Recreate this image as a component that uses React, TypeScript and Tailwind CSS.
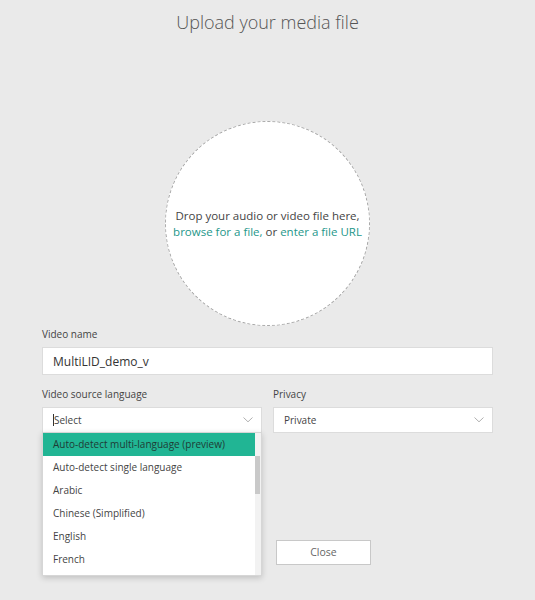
import { useState } from "react";

const languages = [
  "Auto-detect multi-language (preview)",
  "Auto-detect single language",
  "Arabic",
  "Chinese (Simplified)",
  "English",
  "French",
];

function Chevron() {
  return (
    <svg width="10" height="6" viewBox="0 0 10 6" fill="none" className="text-[#b0b0b0]">
      <path d="M0.5 0.5L5 4.8L9.5 0.5" stroke="currentColor" strokeWidth="1" />
    </svg>
  );
}

export default function App() {
  const [name, setName] = useState("MultiLID_demo_v");
  const [active] = useState(0);

  return (
    <div
      className="w-[535px] h-[600px] bg-[#eaeaea] text-[#333] overflow-hidden"
      style={{ fontFamily: '"Open Sans", "Noto Sans", sans-serif' }}
    >
      <h1 className="pt-[9px] text-center text-[18px] leading-[26px] font-light text-[#555]">
        Upload your media file
      </h1>

      <div className="flex justify-center mt-[86px]">
        <div className="w-[205px] h-[205px] rounded-full bg-white border border-dashed border-[#a8a8a8] flex flex-col items-center justify-center text-[11.5px] leading-[16px] text-[#444]">
          <span>Drop your audio or video file here,</span>
          <span>
            <span className="text-[#24978a]">browse for a file,</span> or{" "}
            <span className="text-[#24978a]">enter a file URL</span>
          </span>
        </div>
      </div>

      <div className="mx-[42px] mt-[1px]">
        <label className="block text-[10px] leading-[14px] text-[#444]">Video name</label>
        <input
          value={name}
          onChange={(e) => setName(e.target.value)}
          className="mt-[6px] w-full h-[28px] bg-white border border-[#dcdcdc] px-[10px] text-[12px] text-[#333] outline-none"
        />

        <div className="flex gap-[11px] mt-[12px]">
          <div className="w-[220px] relative">
            <label className="block text-[10px] leading-[14px] text-[#444]">Video source language</label>
            <div className="mt-[6px] h-[26px] bg-white border border-[#dcdcdc] flex items-center justify-between pl-[10px] pr-[8px]">
              <span className="text-[10px] text-[#444] border-l border-[#333] leading-[12px]">Select</span>
              <Chevron />
            </div>

            <div className="absolute left-0 top-[45px] w-[220px] h-[144px] bg-white border border-[#d6d6d6] shadow-[0_2px_6px_rgba(0,0,0,0.18)] z-10 flex">
              <ul className="flex-1">
                {languages.map((l, i) => (
                  <li
                    key={l}
                    className={
                      "h-[23px] flex items-center pl-[10px] text-[10px] " +
                      (i === active ? "bg-[#21b594] text-[#1f3b35]" : "text-[#444]")
                    }
                  >
                    {l}
                  </li>
                ))}
              </ul>
              <div className="w-[6px] bg-[#f2f2f2]">
                <div className="mt-[23px] h-[38px] w-[5px] bg-[#c9c9c9]" />
              </div>
            </div>
          </div>

          <div className="flex-1">
            <label className="block text-[10px] leading-[14px] text-[#444]">Privacy</label>
            <div className="mt-[6px] h-[26px] bg-white border border-[#dcdcdc] flex items-center justify-between pl-[10px] pr-[8px]">
              <span className="text-[10px] text-[#444]">Private</span>
              <Chevron />
            </div>
          </div>
        </div>

        <div className="mt-[105px] pl-[234px]">
          <button className="w-[95px] h-[25px] bg-white border border-[#c8c8c8] text-[10.5px] text-[#666]">
            Close
          </button>
        </div>
      </div>
    </div>
  );
}
